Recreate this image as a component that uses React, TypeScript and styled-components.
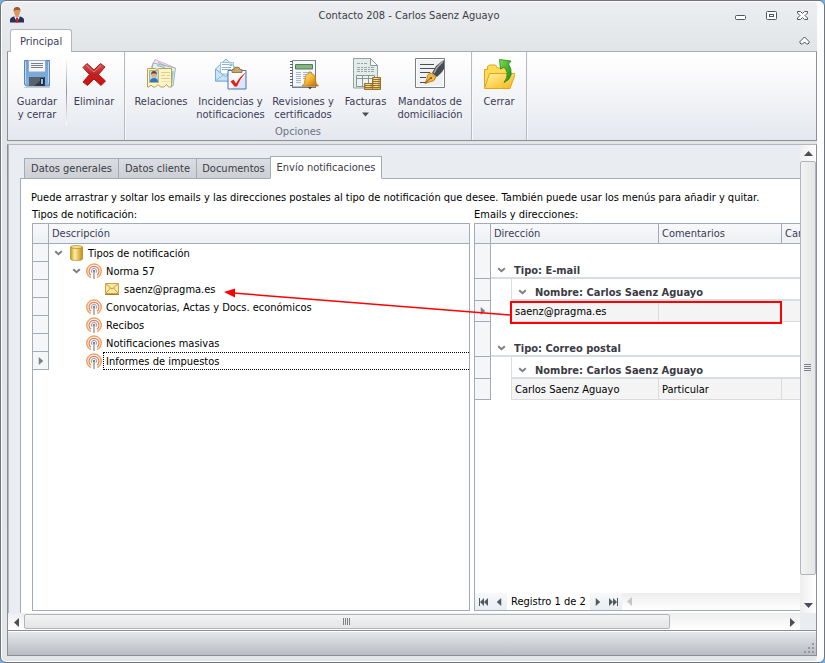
import React from "react";
import styled, { createGlobalStyle, css } from "styled-components";

const line = "#a3abb9";
const frame = "#8b8e96";

const Global = createGlobalStyle`
  *, *::before, *::after { box-sizing: border-box; }
  html, body { margin: 0; }
  body {
    background: #6fb3e6;
    font-family: Tahoma, "DejaVu Sans Condensed", "DejaVu Sans", sans-serif;
    font-size: 11px;
    line-height: 13px;
    color: #000;
  }
  button { font: inherit; color: inherit; margin: 0; padding: 0; border: 0; background: none; }
  p, h1 { margin: 0; font-size: 11px; font-weight: normal; }
  svg { display: block; }
`;

const Window = styled.div`
  min-height: 100vh;
  display: flex;
  flex-direction: column;
  border: 1px solid #70747f;
  border-radius: 6px;
  background: linear-gradient(#eceef1, #e1e5e7 50px, #e3e6e8);
  box-shadow: inset 0 0 0 1px #fff, inset -7px 0 0 #fbfcfc;
  padding: 0 7px 6px 6px;
`;

const TitleBar = styled.header`
  display: grid;
  grid-template-columns: 1fr auto 1fr;
  align-items: center;
  height: 28px;
  padding: 0 8px 0 2px;
  color: #3b3b44;
`;

const WindowButtons = styled.div`
  display: flex;
  justify-content: flex-end;
  gap: 18px;
`;

const RibbonTabs = styled.div`
  display: flex;
  justify-content: space-between;
  height: 23px;
  padding: 0 5px 0 3px;
  border-bottom: 1px solid #a9acb1;
`;

const RibbonTab = styled.button`
  height: 23px;
  padding: 0 9px;
  border: 1px solid #b2b6bd;
  border-bottom: 0;
  border-radius: 3px 3px 0 0;
  background: #fff;
  color: #3b3b57;
`;

const Collapse = styled.button`
  align-self: center;
  padding: 0 2px;
`;

const Ribbon = styled.div`
  display: flex;
  height: 89px;
  border: 1px solid ${frame};
  border-top: 0;
  background: linear-gradient(#fff, #fbfbfc 20%, #e4e8ee);
`;

const Group = styled.section`
  display: flex;
  flex-direction: column;
  border-right: 1px solid #b7bac0;
  box-shadow: 1px 0 0 #f8f9fa;
`;

const GroupButtons = styled.div`
  display: flex;
  height: 73px;
  padding: 6px 3px 0;
`;

const GroupTitle = styled.div`
  text-align: center;
  color: #6c7384;
`;

const Divider = styled.div`
  width: 1px;
  margin: 0 0 0 3px;
  background: linear-gradient(#fff, #8d929c, #fff);
`;

const RibbonButton = styled.button<{ $w: number }>`
  width: ${(p) => p.$w}px;
  display: flex;
  flex-direction: column;
  align-items: center;
  justify-content: flex-start;
  gap: 5px;
  color: #3b3b57;
  white-space: pre-line;
  text-align: center;
`;

const ButtonText = styled.span`
  display: flex;
  flex-direction: column;
  align-items: center;
  gap: 3px;
`;

const Body = styled.main`
  flex: 1;
  display: grid;
  grid-template-columns: minmax(0, 1fr) 16px;
  grid-template-rows: 1fr 17px;
  margin-top: 3px;
  border: 1px solid ${frame};
  border-top-color: #b3b6bc;
  background: #e9ecf0;
`;

const Panel = styled.div`
  display: flex;
  flex-direction: column;
  border-left: 1px solid #b3b6bc;
  padding: 11px 0 0 11px;
  overflow: hidden;
`;

const TabStrip = styled.div`
  display: flex;
  align-items: flex-end;
  height: 23px;
  margin-bottom: -1px;
  padding-left: 4px;
`;

const Tab = styled.button<{ $w: number; $active?: boolean }>`
  position: relative;
  width: ${(p) => p.$w}px;
  height: 21px;
  border: 1px solid ${line};
  margin-right: -1px;
  background: linear-gradient(#dadde2, #ccd0d5);
  color: #3b3b44;
  white-space: nowrap;
  ${(p) =>
    p.$active &&
    css`
      height: 23px;
      border-bottom-color: #fff;
      background: #fff;
    `}
`;

const Page = styled.div`
  flex: 1;
  display: flex;
  flex-direction: column;
  border: 1px solid ${line};
  border-width: 1px 0 0 1px;
  background: #fff;
  padding: 12px 0 2px 10px;
`;

const Split = styled.div`
  flex: 1;
  display: grid;
  grid-template-columns: minmax(0, 438fr) minmax(0, 326fr);
  gap: 4px;
  padding: 4px 0 0 1px;
`;

const Pane = styled.section`
  position: relative;
  display: flex;
  flex-direction: column;
  gap: 2px;
`;

const Box = styled.div<{ $open?: boolean }>`
  flex: 1;
  display: flex;
  flex-direction: column;
  justify-content: space-between;
  overflow: hidden;
  border: 1px solid ${line};
  border-right-width: ${(p) => (p.$open ? 0 : 1)}px;
`;

const Table = styled.table`
  width: 100%;
  table-layout: fixed;
  border-collapse: separate;
  border-spacing: 0;
  td, th { padding: 0; }
`;

const Head = styled.th<{ $last?: boolean }>`
  height: 20px;
  border-bottom: 1px solid ${line};
  border-right: ${(p) => (p.$last ? 0 : 1)}px solid ${line};
  background: linear-gradient(#f7f8fa, #edf0f4);
  color: #3b3b57;
  font-weight: normal;
  text-align: left;
  white-space: nowrap;
  overflow: hidden;
  && { padding-left: 3px; }
`;

const Indicator = styled.td`
  border-bottom: 1px solid ${line};
  border-right: 1px solid ${line};
  background: #f4f6f8;
  svg { margin: 0 auto; }
`;

const Node = styled.div<{ $level: number }>`
  display: flex;
  align-items: center;
  height: 18px;
  padding-left: ${(p) => p.$level * 18}px;
`;

const Slot = styled.span`
  flex: none;
  width: 18px;
  display: flex;
  justify-content: center;
`;

const NodeText = styled.span<{ $focus?: boolean }>`
  height: 18px;
  padding: 3px 3px 2px;
  ${(p) =>
    p.$focus &&
    css`
      flex: 1;
      border: 1px dotted #000;
      border-right: 0;
      padding: 2px 2px 1px;
    `}
`;

const GroupCell = styled.td<{ $tall?: boolean }>`
  height: ${(p) => (p.$tall ? 35 : 22)}px;
  border-bottom: 2px solid #d9dde2;
  vertical-align: bottom;
`;

const GroupLabel = styled.div`
  display: flex;
  align-items: center;
  gap: 8px;
  height: 14px;
  padding-left: 6px;
  font-weight: bold;
  color: #3b3b44;
  white-space: nowrap;
`;

const Indent = styled.td`
  border-right: 1px solid #d9dde2;
`;

const Cell = styled.td`
  height: 21px;
  border: 1px solid #dbdbdb;
  border-width: 0 1px 1px 0;
  background: #f4f4f4;
  white-space: nowrap;
  && { padding-left: 3px; }
  &:last-child { border-right: 0; }
`;

const Navigator = styled.div`
  display: flex;
  height: 17px;
  background: linear-gradient(#ededee, #fff);
`;

const NavButton = styled.button<{ $plain?: boolean }>`
  width: 16px;
  display: flex;
  align-items: center;
  justify-content: center;
  background: ${(p) => (p.$plain ? "none" : "linear-gradient(#f7f9fa, #e9edf2)")};
`;

const NavText = styled.span`
  padding: 2px 4px 0;
  background: #fff;
  white-space: nowrap;
`;

const Annotation = styled.svg`
  position: absolute;
  left: -251px;
  top: 66px;
  pointer-events: none;
`;

const Scrollbar = styled.div<{ $vertical?: boolean }>`
  display: flex;
  flex-direction: ${(p) => (p.$vertical ? "column" : "row")};
  padding: ${(p) => (p.$vertical ? "0" : "1px 0")};
  background: ${(p) =>
    p.$vertical ? "linear-gradient(90deg, #eeeeef, #fff)" : "linear-gradient(#eeeeef, #fff)"};
`;

const ScrollButton = styled.button`
  flex: none;
  width: 16px;
  height: 16px;
  display: flex;
  align-items: center;
  justify-content: center;
`;

const Track = styled.div<{ $vertical?: boolean }>`
  flex: 1;
  display: flex;
  flex-direction: ${(p) => (p.$vertical ? "column" : "row")};
`;

const Thumb = styled.div<{ $size: string; $vertical?: boolean }>`
  flex: 0 0 ${(p) => p.$size};
  display: flex;
  align-items: center;
  justify-content: center;
  border: 1px solid #b2b5bb;
  border-radius: 2px;
  background: linear-gradient(${(p) => (p.$vertical ? "90deg" : "180deg")}, #f2f3f3, #e3e5e6);
`;

const Status = styled.footer`
  display: flex;
  justify-content: flex-end;
  align-items: flex-end;
  height: 25px;
  padding: 0 1px 1px;
  border: 1px solid ${frame};
  border-top: 0;
  background: linear-gradient(#e5e8ed, #b9bdc2);
  box-shadow: inset 0 1px 0 #fff;
`;

type Dir = "up" | "down" | "left" | "right";
const arrows: Record<Dir, string> = {
  up: "M0 7 4.5 2 9 7Z",
  down: "M0 2 4.5 7 9 2Z",
  left: "M7 0 2 4.5 7 9Z",
  right: "M2 0 7 4.5 2 9Z",
};
const Arrow = ({ dir, fill = "#4b4e55", size = 9 }: { dir: Dir; fill?: string; size?: number }) => (
  <svg width={size} height={size} viewBox="0 0 9 9"><path d={arrows[dir]} fill={fill} /></svg>
);

const Skip = ({ flip }: { flip?: boolean }) => (
  <svg width="9" height="8" viewBox="0 0 9 8">
    <path
      d={flip ? "M0 0 4 4 0 8ZM4 0 8 4 4 8ZM8 0H9V8H8Z" : "M9 0 5 4 9 8ZM5 0 1 4 5 8ZM0 0H1V8H0Z"}
      fill="#515963"
    />
  </svg>
);

const Chevron = () => (
  <svg width="9" height="6" viewBox="0 0 9 6">
    <path d="M1.200 1.200 4.500 4.200 7.800 1.200" fill="none" stroke="#7b7f88" strokeWidth="2" />
  </svg>
);

const Grip = ({ vertical }: { vertical?: boolean }) => (
  <svg width="8" height="8" viewBox="0 0 8 8" shapeRendering="crispEdges">
    <path
      d={vertical ? "M0 .5H7M0 2.5H7M0 4.5H7M0 6.5H7" : "M.5 0V7M2.5 0V7M4.5 0V7M6.5 0V7"}
      stroke="#7d8087"
    />
  </svg>
);

const PersonIcon = () => (
  <svg width="16" height="16" viewBox="0 0 16 16">
    <path d="M1 15.500V13q0-2.500 4-3.500h6q4 1 4 3.500v2.500Z" fill="#26305a" />
    <path d="M5 9.500 8 15l3-5.500Z" fill="#f3f3f8" />
    <path d="M7.200 10.500h1.600l.6 5H6.600Z" fill="#d21919" />
    <path d="M5 4q0-3.500 3-3.500T11 4q0 3.500-1.500 5L8 10.500 6.500 9Q5 7.500 5 4Z" fill="#d9975c" />
    <path d="M4.600 5Q4 0 8 0t3.400 5L10.500 3H6Z" fill="#9a5a2b" />
  </svg>
);

const SaveIcon = () => (
  <svg width="32" height="32" viewBox="0 0 32 32">
    <defs>
      <linearGradient id="save" x1="0" y1="0" x2="0" y2="1">
        <stop offset="0" stopColor="#6f9fd0" /><stop offset="1" stopColor="#7fb2e6" />
      </linearGradient>
    </defs>
    <path d="M3 29.500h26" stroke="#c6cbd2" />
    <path d="M3.500 2.500h25V28H5L3.500 26.500Z" fill="url(#save)" stroke="#5b86b8" />
    <path d="M4.500 3.500v22M27.500 3.500v22" stroke="#b7d6f3" />
    <path d="M7.500 2.500h17V14h-17Z" fill="#f4f6f8" stroke="#93abc6" />
    <path d="M10 5.500h12M10 7.500h12M10 9.500h12" stroke="#777d86" />
    <path d="M8 19h16v9H8Z" fill="#343a42" />
    <path d="M8 19h16L13 28H8Z" fill="#59616b" />
    <path d="M19.500 20.500h3v6h-3Z" fill="#8fc1f0" stroke="#24292f" />
  </svg>
);

const DeleteIcon = () => (
  <svg width="32" height="32" viewBox="0 0 32 32">
    <defs>
      <linearGradient id="del" x1="0" y1="0" x2="0" y2="1">
        <stop offset="0" stopColor="#dd5252" /><stop offset=".5" stopColor="#bb2222" /><stop offset="1" stopColor="#d80f0f" />
      </linearGradient>
    </defs>
    <path d="M9 5.500 16 12l6.500-6.500L27 9l-6.500 7.500L27.500 23 23 27.500l-7-6.500-6.500 6.500L5 24l6.500-7.500L5 9.500Z" fill="url(#del)" stroke="#a81818" strokeLinejoin="round" />
    <path d="M8.500 7.500 16 14l7-6.500" fill="none" stroke="#ea8c8c" strokeWidth=".8" />
  </svg>
);

const RelationsIcon = () => (
  <svg width="32" height="32" viewBox="0 0 32 32">
    <path d="M10 1.500 28 9l-4 10L5 12Z" fill="#f6e6f3" stroke="#b9a3bb" strokeWidth=".8" />
    <path d="m13 4.500 8 3.500" stroke="#c79bc9" />
    <path d="m8 5 22.500 5L28 28 6 22Z" fill="#e3f2ef" stroke="#8aa7a5" strokeWidth=".8" />
    <path d="m12 7.500 8 2" stroke="#7fb8c2" />
    <path d="m28 13-1.500 12" stroke="#8fc2cb" strokeWidth="1.500" />
    <path d="M2.500 10.500h8q1.500 2 3.500 0h12.500V29h-3l-2-2.500-2.500 2.500h-3.500l-2.500-2.500L10.500 29H8l-2-2-2 2H2.500Z" fill="#fdf4c8" stroke="#b7a25d" />
    <path d="M4.500 12.500h9v12h-9Z" fill="#b9daf3" stroke="#b7a25d" strokeWidth=".8" />
    <path d="M5 24q0-4 4-4t4 4Z" fill="#2e78c3" />
    <circle cx="9" cy="17" r="2.600" fill="#e2ae79" />
    <path d="M6 17q0-4 3-4t3 4l-1-1.500H7Z" fill="#70401b" />
    <path d="M16 14.500h9M16 17.500h4M22 17.500h3M16 20.500h9" stroke="#dfcf8c" />
    <path d="M16 23.500h9" stroke="#ece1ae" />
  </svg>
);

const IncidentsIcon = () => (
  <svg width="34" height="32" viewBox="0 0 34 32">
    <path d="M1.500 11 12 1l10.500 10v12h-21Z" fill="#d8ecfa" stroke="#7fadd0" />
    <path d="M6.500 4.500h13V16h-13Z" fill="#fbfdfe" stroke="#a0c0da" />
    <path d="M8 6.500h7M8 9.500h9M8 11.500h9" stroke="#90b2cf" />
    <path d="M15.500 5.500h3v2.500h-3Z" fill="#84c9b9" />
    <path d="m1.500 11 10 7.500 11-7.500v12h-21Z" fill="#c6e4f8" stroke="#7fadd0" />
    <path d="m1.500 23 8-6.500" stroke="#8dbbdc" />
    <path d="M14 12.500h18V31H14Z" fill="#f8fbff" />
    <path d="M17 31h15V17Z" fill="#dbe7f8" />
    <path d="M14 12.500h18V31H14Z" fill="none" stroke="#4b75b4" />
    <path d="M18 11.500h2q0-2.500 3-2.500t3 2.500h2v3H18Z" fill="#cba865" stroke="#86673a" strokeWidth=".8" />
    <path d="m16.500 23.500 3-2 2.500 4Q26 18 32.500 14q-6 6-9.500 14.500h-2.500Z" fill="#e92113" />
  </svg>
);

const ReviewIcon = () => (
  <svg width="32" height="32" viewBox="0 0 32 32">
    <defs>
      <linearGradient id="bell" x1="0" y1="0" x2="1" y2="1">
        <stop offset="0" stopColor="#fff0ad" /><stop offset=".5" stopColor="#f5b62e" /><stop offset="1" stopColor="#b26208" />
      </linearGradient>
    </defs>
    <path d="M5.500 2.500h23V29h-23Z" fill="#f5f7fa" stroke="#7c8798" />
    <path d="M28.500 2v27.500M5 29.500h24" stroke="#6a7c98" />
    <path d="M8.500 6.500h17V11h-17Z" fill="#84b486" stroke="#4c7e50" />
    <path d="M9 14.500h5M9 16.500h5M9 18.500h5M9 20.500h5M9 22.500h5M9 24.500h5M16 14.500h9M16 16.500h9M16 18.500h9M16 20.500h9" stroke="#a9b5ca" />
    <path d="M3 3.500h4M3 6.500h4M3 9.500h4M3 12.500h4M3 15.500h4M3 18.500h4M3 21.500h4M3 24.500h4M3 27.500h4" stroke="#59616d" strokeDasharray="3 1" />
    <path d="M15 28q3-2 3-6 0-6 4-6.500V14h2v1.500q4.500.5 4.500 6.500 0 4 3 6Z" fill="url(#bell)" stroke="#b5781a" strokeWidth=".8" />
    <path d="M21 29h4l-2 2.500Z" fill="#5e3208" />
  </svg>
);

const InvoiceIcon = () => (
  <svg width="32" height="32" viewBox="0 0 32 32">
    <path d="M3.500.5h17l7 7V30h-24Z" fill="#e3ecea" stroke="#93a3a0" />
    <path d="M20.500.5v7h7Z" fill="#f7faf9" stroke="#869794" />
    <path d="M7 5.500h10M7 9.500h17M7 11.500h17M7 13.500h17" stroke="#97a8a5" strokeDasharray="3 1 2 1" />
    <path d="M6.500 17.500h18v11h-18ZM6.500 20.500h18M12.500 17.500v11M18.500 17.500v11" fill="#edf3f2" stroke="#869794" />
    <path d="M22.500 19.500h8V31.500h-8Z" fill="#dcb25f" stroke="#94702f" />
    <path d="M14.500 25.500h8v6h-8Z" fill="#dcb25f" stroke="#94702f" />
    <path d="M22.500 21.500h8M22.500 23.500h8M22.500 25.500h8M14.500 27.500h16M14.500 29.500h16" stroke="#94702f" />
    <path d="M24 20.500h4M24 22.500h4M24 24.500h4M16 26.500h4M24 26.500h4M16 28.500h4M24 28.500h4" stroke="#f8df9c" />
  </svg>
);

const MandateIcon = () => (
  <svg width="32" height="32" viewBox="0 0 32 32">
    <path d="M1.500.5h29v29h-29Z" fill="#fff" stroke="#7a7f86" />
    <path d="M3 2h26v26H3Z" fill="#f0f1f2" />
    <path d="M6 6.500h14M6 10.500h15M6 14.500h10M6 19.500h6M6 24.500h6" stroke="#4b4f55" />
    <path d="M29 2.500 22 8l-4 7 5 4 5-5 2-3V2.500Z" fill="#474a50" />
    <path d="m29 3.500-6 6-3 5.500" stroke="#a7aab0" strokeWidth="1.500" fill="none" />
    <path d="m17 15 5 4q-2 5-5 4.500L11 25.500l2-5q0-5 4-5.500Z" fill="#f5b83f" stroke="#a86d13" strokeWidth=".8" />
    <path d="m11.500 25 5-5" stroke="#704608" />
    <circle cx="17" cy="20" r="1" fill="#704608" />
  </svg>
);

const CloseFolderIcon = () => (
  <svg width="32" height="32" viewBox="0 0 32 32">
    <defs>
      <linearGradient id="fold" x1="0" y1="0" x2="1" y2="1">
        <stop offset="0" stopColor="#fff3a0" /><stop offset="1" stopColor="#fbb414" />
      </linearGradient>
      <linearGradient id="green" x1="0" y1="0" x2="1" y2="1">
        <stop offset="0" stopColor="#7ce04e" /><stop offset="1" stopColor="#188b16" />
      </linearGradient>
    </defs>
    <path d="M1.500 11.500h3v-3l2-1.500h6l2 3h11V29H1.500Z" fill="#fcdb58" stroke="#e0a51c" />
    <path d="M6.500 15.500h26L27 30.500H1.500Z" fill="url(#fold)" stroke="#e0a51c" />
    <path d="M16.500 1.500 28 3l-2.500 3q3.500 5 2.500 11-1.500 5.500-7 7.500 4-5 3-10-1-4-3-5.500L17.500 11Z" fill="url(#green)" stroke="#25831a" strokeWidth=".8" strokeLinejoin="round" />
  </svg>
);

const DatabaseIcon = () => (
  <svg width="13" height="16" viewBox="0 0 13 16">
    <defs>
      <linearGradient id="db">
        <stop offset="0" stopColor="#c79619" /><stop offset=".35" stopColor="#fff0a5" /><stop offset="1" stopColor="#c58c0b" />
      </linearGradient>
    </defs>
    <path d="M.5 2v12q0 1.500 6 1.500t6-1.500V2Z" fill="url(#db)" stroke="#a57a17" strokeWidth=".6" />
    <ellipse cx="6.500" cy="2" rx="6" ry="1.500" fill="#f9e087" stroke="#a57a17" strokeWidth=".6" />
  </svg>
);

const BroadcastIcon = () => (
  <svg width="16" height="16" viewBox="0 0 16 16" fill="none">
    <path d="M4.800 14.600A7.200 7.200 0 1 1 11.200 14.600" stroke="#f4a15a" strokeWidth="1.500" />
    <path d="M5 12.300A5 5 0 1 1 11 12.300" stroke="#e8745a" strokeWidth="1.200" />
    <path d="M6 9.800A2.700 2.700 0 1 1 10 9.800" stroke="#9a9a9e" />
    <circle cx="8" cy="8" r="1.300" fill="#85858a" />
    <path d="M8 9v7" stroke="#b4b6ba" strokeWidth="2" />
  </svg>
);

const MailIcon = () => (
  <svg width="14" height="12" viewBox="0 0 14 12">
    <path d="M.5.5h13v10H.5Z" fill="#fbe9a0" stroke="#c9a24c" />
    <path d="m1 1 6 5 6-5M1 10l4.500-5M13 10 8.500 5" fill="none" stroke="#c79b3c" />
    <path d="M0 11.500h14" stroke="#a67d28" />
  </svg>
);

const icons = { root: DatabaseIcon, channel: BroadcastIcon, mail: MailIcon };
type TreeItem = { level: number; icon: keyof typeof icons; text: string; open?: boolean; focus?: boolean };
const tree: TreeItem[] = [
  { level: 0, icon: "root", text: "Tipos de notificación", open: true },
  { level: 1, icon: "channel", text: "Norma 57", open: true },
  { level: 2, icon: "mail", text: "saenz@pragma.es" },
  { level: 1, icon: "channel", text: "Convocatorias, Actas y Docs. económicos" },
  { level: 1, icon: "channel", text: "Recibos" },
  { level: 1, icon: "channel", text: "Notificaciones masivas" },
  { level: 1, icon: "channel", text: "Informes de impuestos", focus: true },
];

const contacts = [
  { type: "Tipo: E-mail", name: "Nombre: Carlos Saenz Aguayo", address: "saenz@pragma.es", note: "", current: true },
  { type: "Tipo: Correo postal", name: "Nombre: Carlos Saenz Aguayo", address: "Carlos Saenz Aguayo", note: "Particular", current: false },
];

const options = [
  { w: 66, text: "Relaciones", Icon: RelationsIcon },
  { w: 73, text: "Incidencias y\nnotificaciones", Icon: IncidentsIcon },
  { w: 72, text: "Revisiones y\ncertificados", Icon: ReviewIcon },
  { w: 53, text: "Facturas", Icon: InvoiceIcon, menu: true },
  { w: 76, text: "Mandatos de\ndomiciliación", Icon: MandateIcon },
];

export default function App() {
  return (
    <>
      <Global />
      <Window>
        <TitleBar>
          <PersonIcon />
          <h1>Contacto 208 - Carlos Saenz Aguayo</h1>
          <WindowButtons>
            <button aria-label="Minimizar">
              <svg width="13" height="13" viewBox="0 0 13 13"><rect x="1.500" y="6.500" width="10" height="4" rx="1" fill="#fff" stroke="#50555e" /></svg>
            </button>
            <button aria-label="Maximizar">
              <svg width="13" height="13" viewBox="0 0 13 13" fill="#fff" stroke="#50555e"><rect x="1.500" y="2.500" width="10" height="8" rx="1" /><rect x="4.500" y="5.500" width="4" height="2" /></svg>
            </button>
            <button aria-label="Cerrar ventana">
              <svg width="13" height="13" viewBox="0 0 13 13"><path d="M1.500 2.500h3l2 2 2-2h3v1.500L9 6.500l2.500 2.500v1.500h-3l-2-2-2 2h-3V9L4 6.500 1.500 4Z" fill="#fff" stroke="#50555e" /></svg>
            </button>
          </WindowButtons>
        </TitleBar>
        <RibbonTabs>
          <RibbonTab>Principal</RibbonTab>
          <Collapse aria-label="Contraer cinta">
            <svg width="11" height="9" viewBox="0 0 11 9"><path d="M1 5.500 5.500 1 10 5.500v1.500l-1 1H7.500l-2-2-2 2H2L1 7Z" fill="#fff" stroke="#50555e" /></svg>
          </Collapse>
        </RibbonTabs>
        <Ribbon>
          <Group>
            <GroupButtons>
              <RibbonButton $w={52}><SaveIcon /><ButtonText>{"Guardar\ny cerrar"}</ButtonText></RibbonButton>
              <Divider />
              <RibbonButton $w={54}><DeleteIcon /><ButtonText>Eliminar</ButtonText></RibbonButton>
            </GroupButtons>
          </Group>
          <Group>
            <GroupButtons>
              {options.map(({ w, text, Icon, menu }) => (
                <RibbonButton key={text} $w={w}>
                  <Icon />
                  <ButtonText>{text}{menu && <Arrow dir="down" size={7} />}</ButtonText>
                </RibbonButton>
              ))}
            </GroupButtons>
            <GroupTitle>Opciones</GroupTitle>
          </Group>
          <Group>
            <GroupButtons>
              <RibbonButton $w={48}><CloseFolderIcon /><ButtonText>Cerrar</ButtonText></RibbonButton>
            </GroupButtons>
          </Group>
        </Ribbon>
        <Body>
          <Panel>
            <TabStrip role="tablist">
              <Tab role="tab" $w={95}>Datos generales</Tab>
              <Tab role="tab" $w={79}>Datos cliente</Tab>
              <Tab role="tab" $w={75}>Documentos</Tab>
              <Tab role="tab" aria-selected $active $w={112}>Envío notificaciones</Tab>
            </TabStrip>
            <Page>
              <p>Puede arrastrar y soltar los emails y las direcciones postales al tipo de notificación que desee. También puede usar los menús para añadir y quitar.</p>
              <Split>
                <Pane>
                  <p id="tree-label">Tipos de notificación:</p>
                  <Box>
                    <Table aria-labelledby="tree-label">
                      <colgroup><col width="16" /><col /></colgroup>
                      <thead><tr><Head /><Head $last>Descripción</Head></tr></thead>
                      <tbody>
                        {tree.map((item) => {
                          const Icon = icons[item.icon];
                          return (
                            <tr key={item.text}>
                              <Indicator>{item.focus && <Arrow dir="right" size={8} fill="#7b7f88" />}</Indicator>
                              <td>
                                <Node $level={item.level}>
                                  <Slot>{item.open && <Chevron />}</Slot>
                                  <Slot><Icon /></Slot>
                                  <NodeText $focus={item.focus}>{item.text}</NodeText>
                                </Node>
                              </td>
                            </tr>
                          );
                        })}
                      </tbody>
                    </Table>
                  </Box>
                </Pane>
                <Pane>
                  <p id="grid-label">Emails y direcciones:</p>
                  <Box $open>
                    <Table aria-labelledby="grid-label">
                      <colgroup><col width="16" /><col width="21" /><col width="147" /><col width="123" /><col /></colgroup>
                      <thead>
                        <tr><Head /><Head colSpan={2}>Dirección</Head><Head>Comentarios</Head><Head $last>Car</Head></tr>
                      </thead>
                      <tbody>
                        {contacts.map((c) => (
                          <React.Fragment key={c.type}>
                            <tr><Indicator /><GroupCell $tall colSpan={4}><GroupLabel><Chevron />{c.type}</GroupLabel></GroupCell></tr>
                            <tr><Indicator /><Indent /><GroupCell colSpan={3}><GroupLabel><Chevron />{c.name}</GroupLabel></GroupCell></tr>
                            <tr>
                              <Indicator>{c.current && <Arrow dir="right" size={8} fill="#7b7f88" />}</Indicator>
                              <Indent /><Cell>{c.address}</Cell><Cell>{c.note}</Cell><Cell />
                            </tr>
                          </React.Fragment>
                        ))}
                      </tbody>
                    </Table>
                    <Navigator>
                      <NavButton aria-label="Primero"><Skip /></NavButton>
                      <NavButton aria-label="Anterior"><Arrow dir="left" size={8} fill="#515963" /></NavButton>
                      <NavText>Registro 1 de 2</NavText>
                      <NavButton aria-label="Siguiente"><Arrow dir="right" size={8} fill="#515963" /></NavButton>
                      <NavButton aria-label="Último"><Skip flip /></NavButton>
                      <NavButton $plain aria-label="Desplazar a la izquierda"><Arrow dir="left" fill="#c3c5c8" /></NavButton>
                    </Navigator>
                  </Box>
                  <Annotation width="560" height="50" viewBox="0 0 560 50">
                    <path d="M10 19 287 41" stroke="#f00" strokeWidth="1.500" />
                    <path d="M1 18 12 14.500v9Z" fill="#f00" />
                    <rect x="288" y="28" width="270" height="21" fill="none" stroke="#f00" strokeWidth="2" />
                  </Annotation>
                </Pane>
              </Split>
            </Page>
          </Panel>
          <Scrollbar $vertical>
            <ScrollButton aria-label="Subir"><Arrow dir="up" /></ScrollButton>
            <Track $vertical><Thumb $vertical $size="95%"><Grip vertical /></Thumb></Track>
            <ScrollButton aria-label="Bajar"><Arrow dir="down" /></ScrollButton>
          </Scrollbar>
          <Scrollbar>
            <ScrollButton aria-label="Izquierda"><Arrow dir="left" /></ScrollButton>
            <Track><Thumb $size="85%"><Grip /></Thumb></Track>
            <ScrollButton aria-label="Derecha"><Arrow dir="right" /></ScrollButton>
          </Scrollbar>
        </Body>
        <Status>
          <svg width="12" height="12" viewBox="0 0 12 12" fill="#94989f">
            <path d="M9 1h2v2H9ZM9 5h2v2H9ZM9 9h2v2H9ZM5 5h2v2H5ZM5 9h2v2H5ZM1 9h2v2H1Z" />
          </svg>
        </Status>
      </Window>
    </>
  );
}
